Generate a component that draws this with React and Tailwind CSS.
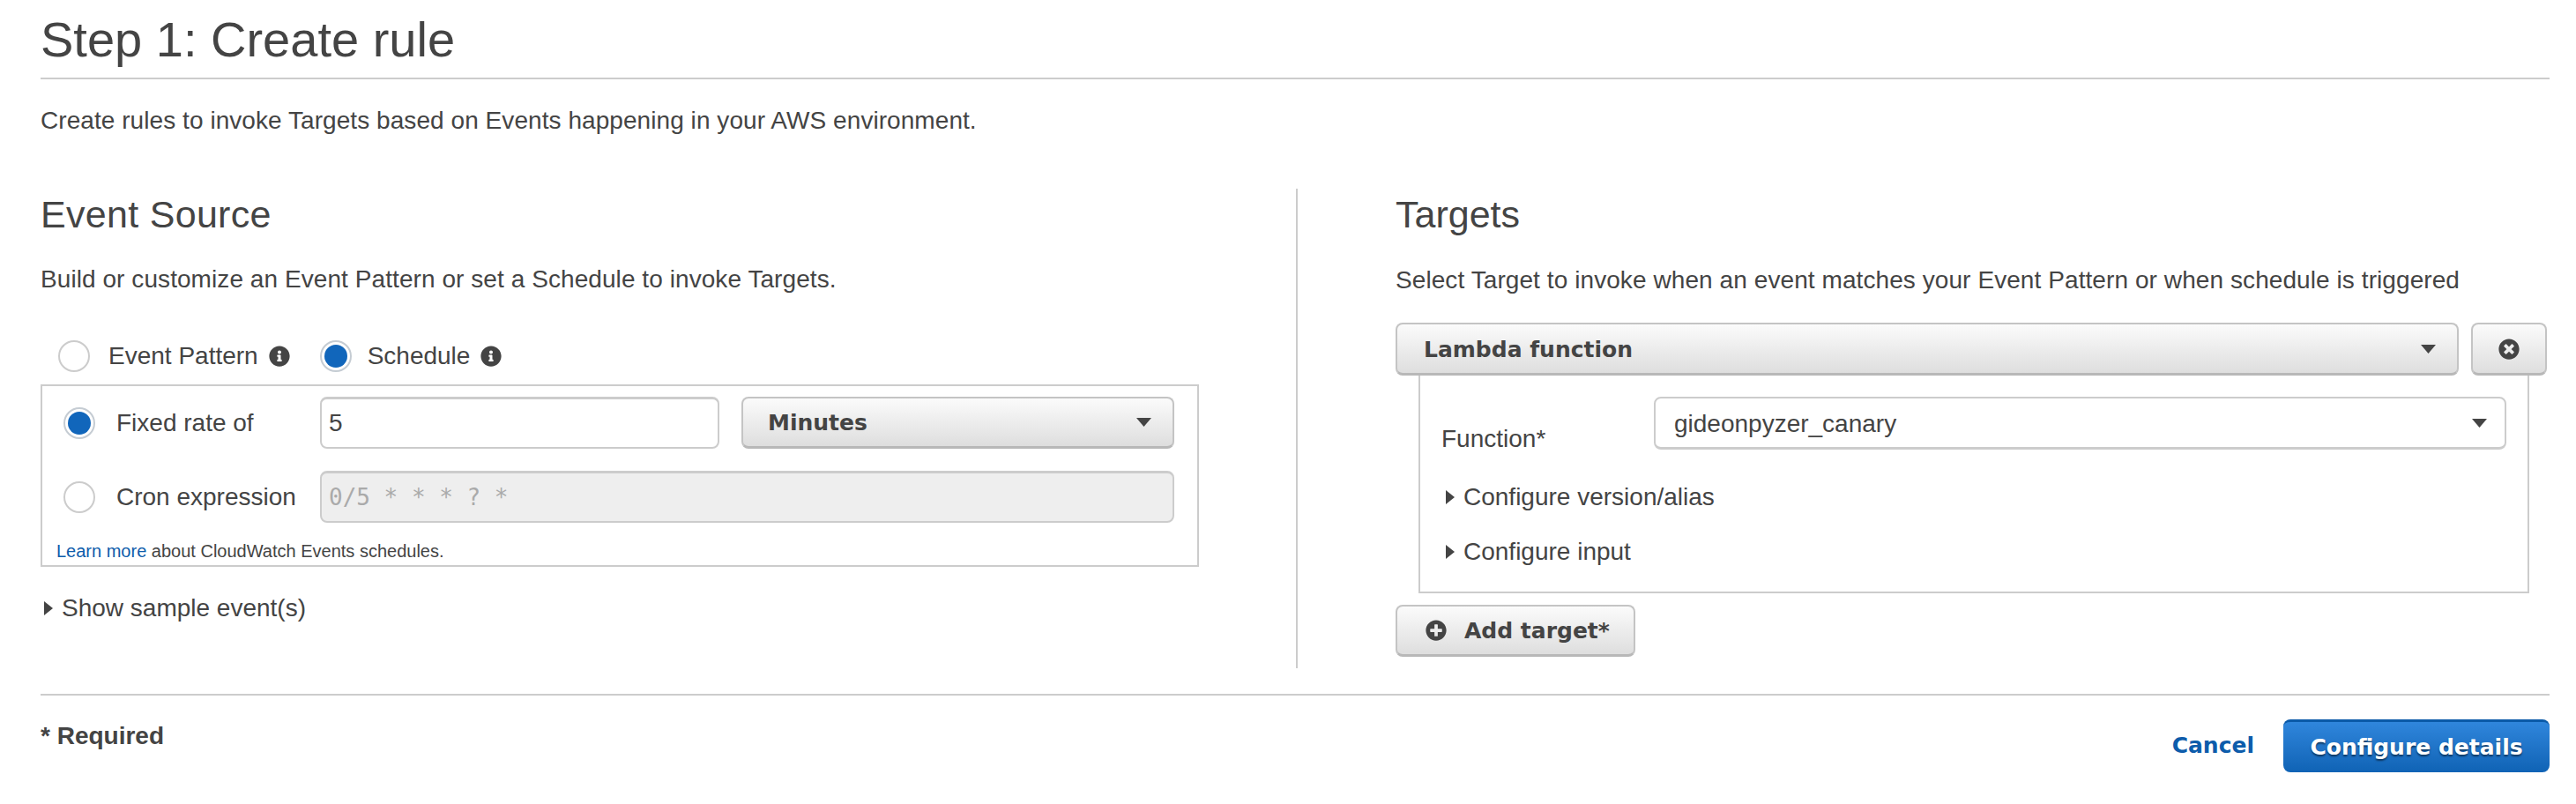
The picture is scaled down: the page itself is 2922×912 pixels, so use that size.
import { FaInfoCircle, FaTimesCircle, FaPlusCircle } from "react-icons/fa";

const btnClass =
  "flex items-center rounded-[8px] border-2 border-[#c4c4c4] border-b-[3px] border-b-[#b8b8b8] bg-gradient-to-b from-[#fbfbfb] to-[#dedede]";
const boldFont = "pt-[2px] font-['DejaVu_Sans'] font-bold text-[#444]";

function Radio({ checked }) {
  return checked ? (
    <span className="flex h-[36px] w-[36px] shrink-0 items-center justify-center rounded-full border-2 border-[#c5ccd3] bg-white">
      <span className="h-[26px] w-[26px] rounded-full bg-[#1166bb]" />
    </span>
  ) : (
    <span className="h-[36px] w-[36px] shrink-0 rounded-full border-2 border-[#ccc] bg-white" />
  );
}

function Caret() {
  return (
    <svg width="10" height="16" viewBox="0 0 10 16" className="shrink-0" fill="#444">
      <path d="M0 0 L10 8 L0 16 Z" />
    </svg>
  );
}

function Arrow() {
  return (
    <svg width="17" height="10" viewBox="0 0 17 10" className="shrink-0" fill="#444">
      <path d="M0 0 H17 L8.5 10 Z" />
    </svg>
  );
}

function Expander({ label, className }) {
  return (
    <div className={"flex h-[34px] items-center text-[28px] leading-[34px] " + className}>
      <Caret />
      <span className="ml-[10px]">{label}</span>
    </div>
  );
}

export default function App() {
  return (
    <div className="h-[912px] w-[2922px] bg-white pl-[46px] pr-[30px] font-['Liberation_Sans',sans-serif] text-[#444]">
      {/* HEADER */}
      <h1 className="h-[90px] border-b-2 border-[#ccc] text-[56px] leading-[90px]">Step 1: Create rule</h1>
      <p className="mt-[30px] text-[28px] leading-[34px] tracking-[0.06px]">
        Create rules to invoke Targets based on Events happening in your AWS environment.
      </p>

      {/* COLUMNS */}
      <div className="mt-[60px] flex h-[544px]">
        <div className="w-[1426px] shrink-0 border-r-2 border-[#ccc] pr-[110px]">
          <h2 className="mt-[4px] text-[43px] leading-[50px] tracking-[0.3px]">Event Source</h2>
          <p className="mt-[32px] text-[28px] leading-[34px] tracking-[0.07px]">
            Build or customize an Event Pattern or set a Schedule to invoke Targets.
          </p>

          <div className="mt-[52px] flex h-[36px] items-center pl-[20px] text-[28px]">
            <Radio />
            <span className="ml-[21px]">Event Pattern</span>
            <FaInfoCircle className="ml-[12px] text-[24px]" />
            <span className="ml-[34px]"><Radio checked /></span>
            <span className="ml-[18px]">Schedule</span>
            <FaInfoCircle className="ml-[12px] text-[24px]" />
          </div>

          <div className="mt-[14px] h-[207px] border-2 border-[#ccc] pl-[24px] pr-[26px] pt-[12px]">
            <div className="flex h-[59px] items-center">
              <Radio checked />
              <span className="ml-[24px] w-[231px] text-[28px]">Fixed rate of</span>
              <div className="flex h-full w-[453px] items-center rounded-[8px] border-2 border-[#ccc] border-t-[3px] bg-white pl-[8px] text-[28px]">
                5
              </div>
              <div className={"ml-[25px] h-full flex-1 justify-between pl-[28px] pr-[24px] " + btnClass}>
                <span className={"text-[25px] " + boldFont}>Minutes</span>
                <Arrow />
              </div>
            </div>
            <div className="mt-[25px] flex h-[59px] items-center">
              <Radio />
              <span className="ml-[24px] w-[231px] text-[28px]">Cron expression</span>
              <div className="flex h-full flex-1 items-center rounded-[8px] border-2 border-[#ccc] border-t-[3px] bg-[#eee] pl-[8px] font-['DejaVu_Sans_Mono'] text-[26px] text-[#aaa]">
                0/5 * * * ? *
              </div>
            </div>
            <p className="-ml-[8px] mt-[20px] text-[20px] leading-[24px]">
              <span className="text-[#0d5cab]">Learn more</span> about CloudWatch Events schedules.
            </p>
          </div>

          <Expander label="Show sample event(s)" className="ml-[4px] mt-[30px]" />
        </div>

        <div className="flex-1 pl-[111px]">
          <h2 className="mt-[4px] text-[43px] leading-[50px]">Targets</h2>
          <p className="mt-[33px] text-[28px] leading-[34px] tracking-[0.08px]">
            Select Target to invoke when an event matches your Event Pattern or when schedule is triggered
          </p>

          <div className="mr-[3px] mt-[31px] flex h-[60px] gap-[14px]">
            <div className={"flex-1 justify-between pl-[30px] pr-[24px] " + btnClass}>
              <span className={"text-[25px] " + boldFont}>Lambda function</span>
              <Arrow />
            </div>
            <div className={"w-[86px] justify-center " + btnClass}>
              <FaTimesCircle className="text-[24px] text-[#444]" />
            </div>
          </div>

          <div className="ml-[26px] mr-[23px] h-[247px] border-2 border-t-0 border-[#ccc] px-[24px] pt-[24px]">
            <div className="flex h-[60px]">
              <span className="w-[241px] pt-[31px] text-[28px] leading-[34px]">Function*</span>
              <div className="flex flex-1 items-center justify-between rounded-[8px] border-2 border-[#ccc] border-b-[3px] pl-[21px] pr-[20px] text-[28px]">
                <span className="pt-[2px]">gideonpyzer_canary</span>
                <Arrow />
              </div>
            </div>
            <Expander label="Configure version/alias" className="ml-[5px] mt-[37px]" />
            <Expander label="Configure input" className="ml-[5px] mt-[28px]" />
          </div>

          <div className={"mt-[13px] h-[59px] w-[272px] pl-[32px] " + btnClass}>
            <FaPlusCircle className="text-[24px] text-[#444]" />
            <span className={"ml-[20px] text-[25px] " + boldFont}>Add target*</span>
          </div>
        </div>
      </div>

      {/* FOOTER */}
      <div className="mt-[29px] flex border-t-2 border-[#ccc] pt-[27px]">
        <span className="mt-[2px] text-[28px] font-bold leading-[34px]">* Required</span>
        <div className="ml-auto flex items-center">
          <span className="font-['DejaVu_Sans'] text-[25px] font-bold text-[#0d5cab]">Cancel</span>
          <div className="ml-[33px] flex h-[60px] w-[302px] items-center justify-center rounded-[8px] border-t-[3px] border-[#0a5aa8] bg-gradient-to-b from-[#2f86dc] to-[#0f63b5] font-['DejaVu_Sans'] text-[25px] font-bold text-white [text-shadow:0_2px_2px_rgba(0,0,0,0.5)]">
            Configure details
          </div>
        </div>
      </div>
    </div>
  );
}
